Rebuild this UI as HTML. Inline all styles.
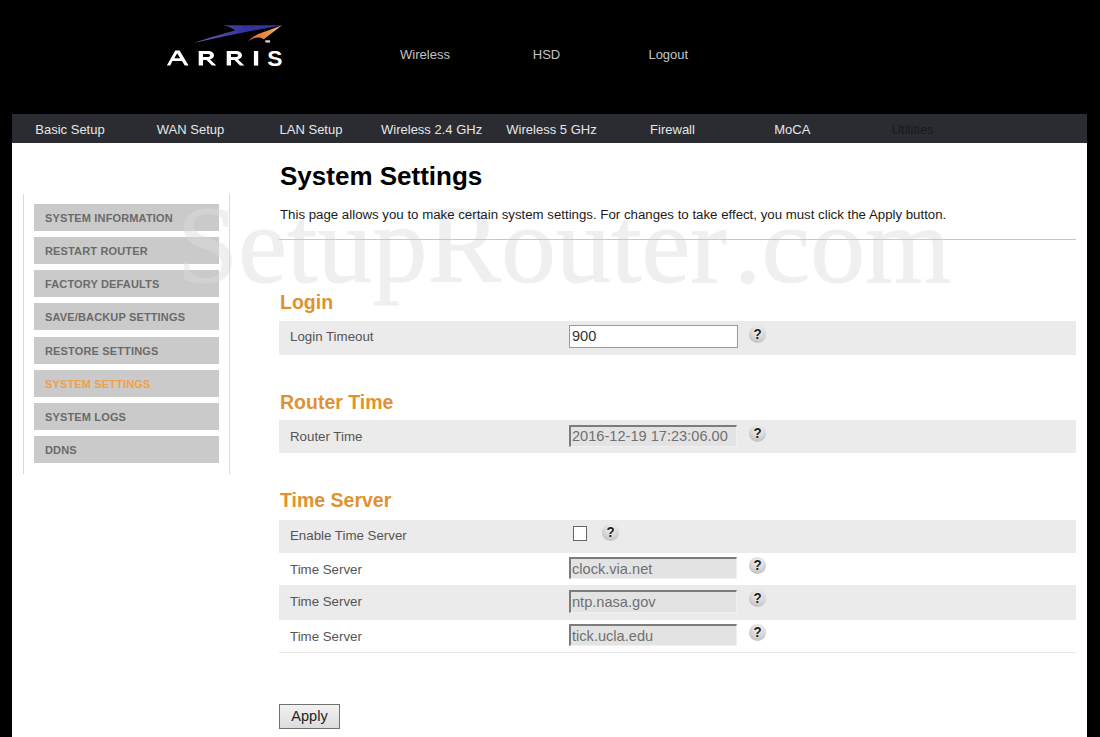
<!DOCTYPE html>
<html><head><meta charset="utf-8">
<style>
*{margin:0;padding:0;box-sizing:border-box}
html,body{width:1100px;height:737px;overflow:hidden;background:#000;font-family:"Liberation Sans",sans-serif}
.a{position:absolute;white-space:nowrap}
#content{position:absolute;left:12px;top:143px;width:1075px;height:600px;background:#fff}
#nav{position:absolute;left:12px;top:114px;width:1075px;height:29px;background:#2a2c32}
.nv{position:absolute;top:122px;font-size:13px;line-height:16px;color:#e6e6e6;transform:translateX(-50%)}
.tn{position:absolute;top:47px;font-size:13px;line-height:16px;color:#c4c4c4;transform:translateX(-50%)}
#side{position:absolute;left:23px;top:194px;width:207px;height:280px;border-left:1px solid #d8d8d8;border-right:1px solid #d8d8d8}
.sb{position:absolute;left:34px;width:185px;height:27px;background:#cacaca;font-weight:bold;font-size:11px;color:#6a6a6a;padding-left:11px;line-height:29px;letter-spacing:0.15px}
.row{position:absolute;left:279px;width:797px}
.g{background:#ebebeb}
.lbl{position:absolute;left:290px;font-size:13.3px;color:#555;line-height:16px}
.h2{position:absolute;left:280px;font-size:19.5px;font-weight:bold;color:#df922f;line-height:22px}
.inp{position:absolute;left:569px;width:168px;height:22px;font-size:14.6px;color:#707070;background:#e3e3e3;border-top:2px solid #7c7c7c;border-left:2px solid #7c7c7c;border-right:1px solid #f0f0f0;border-bottom:1px solid #f0f0f0;padding-left:1px;line-height:21px}
.help{position:absolute;width:17px;height:17px;border-radius:50%;background:radial-gradient(circle at 55% 28%,#f4f4f4 0%,#d6d6d6 50%,#b2b2b2 100%);}
.help:after{content:"?";position:absolute;left:0;top:0;width:17px;text-align:center;font-weight:bold;font-size:14px;line-height:17px;color:#1e1e1e;transform:translateY(-0.5px) scale(0.95,1.08)}
#wm{position:absolute;left:177px;top:180px;font-family:"Liberation Serif",serif;font-size:110px;line-height:130px;color:#dddddd;opacity:0.44;-webkit-text-stroke:0.9px #dddddd;white-space:nowrap;z-index:1}
.t{z-index:2}
</style></head><body>
<div id="content"></div>
<!-- logo -->
<svg class="a" style="left:0;top:0" width="300" height="80" viewBox="0 0 300 80">
  <defs>
    <linearGradient id="og" x1="248" y1="41" x2="282" y2="25" gradientUnits="userSpaceOnUse">
      <stop offset="0" stop-color="#d63c52"/>
      <stop offset="0.3" stop-color="#e47a44"/>
      <stop offset="0.6" stop-color="#ea9640"/>
      <stop offset="1" stop-color="#e8c0b0"/>
    </linearGradient>
    <linearGradient id="bg" x1="193" y1="42" x2="282" y2="25" gradientUnits="userSpaceOnUse">
      <stop offset="0" stop-color="#7a74b0"/>
      <stop offset="0.35" stop-color="#4a44a0"/>
      <stop offset="0.6" stop-color="#3330a0"/>
      <stop offset="1" stop-color="#3a3aa8"/>
    </linearGradient>
  </defs>
  <path d="M222.5,25.2 L282,25.2 Q237.6,33.2 193.3,43 C205,39.5 222,33.8 235.3,30.6 C232,28 228,26 222.5,25.2 Z" fill="url(#bg)"/>
  <path d="M282,25.3 L263.8,39.3 C259,36 253,38 248.2,41.6 C251,37.5 256,34.5 263,32.2 C270,30 276,27.5 282,25.3 Z" fill="url(#og)"/>
  <rect x="265.3" y="40.3" width="4.8" height="2.2" fill="#d8d8d8"/>
  <g fill="#fff" fill-rule="evenodd">
    <path d="M166.8,65.4 L175.3,50.6 L179.6,50.6 L188.6,65.4 L184.8,65.4 L182,61 L172.4,61 L170.3,65.4 Z M174.3,58.2 L180.2,58.2 L177.2,53.2 Z"/>
    <path id="rr" d="M198.7,51 L207.5,51 C212,51 214,53 214,55.3 C214,57.6 212.3,59 210,59.4 L216.4,65.6 L212,65.6 L206.5,59.9 L203,59.9 L203,65.6 L198.7,65.6 Z M203,54 L207.2,54 C209.3,54 210.2,54.6 210.2,55.5 C210.2,56.4 209.3,57 207.2,57 L203,57 Z"/>
    <use href="#rr" x="28" y="0"/>
    <rect x="253.9" y="51" width="4.3" height="14.6"/>
    <text x="0" y="0" font-family="Liberation Sans" font-weight="bold" font-size="21.5" transform="translate(267.2,65.5) scale(1.06,1)">S</text>
  </g>
</svg>
<div class="tn" style="left:425px">Wireless</div>
<div class="tn" style="left:546.5px">HSD</div>
<div class="tn" style="left:668.3px">Logout</div>

<div id="nav"></div>
<div class="nv" style="left:70px">Basic Setup</div>
<div class="nv" style="left:190.5px">WAN Setup</div>
<div class="nv" style="left:311px">LAN Setup</div>
<div class="nv" style="left:431.6px">Wireless 2.4 GHz</div>
<div class="nv" style="left:551.5px">Wireless 5 GHz</div>
<div class="nv" style="left:672.5px">Firewall</div>
<div class="nv" style="left:792.3px">MoCA</div>
<div class="nv" style="left:912.7px;color:#17191d">Utilities</div>

<div id="side"></div>
<div class="sb" style="top:204px">SYSTEM INFORMATION</div>
<div class="sb" style="top:237px">RESTART ROUTER</div>
<div class="sb" style="top:270px">FACTORY DEFAULTS</div>
<div class="sb" style="top:303px">SAVE/BACKUP SETTINGS</div>
<div class="sb" style="top:337px">RESTORE SETTINGS</div>
<div class="sb" style="top:370px;color:#f0a048">SYSTEM SETTINGS</div>
<div class="sb" style="top:403px">SYSTEM LOGS</div>
<div class="sb" style="top:436px">DDNS</div>

<div class="a t" style="left:280px;top:161px;font-size:26px;font-weight:bold;color:#000;line-height:30px">System Settings</div>
<div class="a t" style="left:280px;top:207px;font-size:13.25px;color:#1a1a1a;line-height:16px">This page allows you to make certain system settings. For changes to take effect, you must click the Apply button.</div>
<div class="a t" style="left:279px;top:239px;width:797px;height:1px;background:#c8c8c8"></div>

<div class="h2 t" style="top:291px">Login</div>
<div class="row g" style="top:321px;height:34px"></div>
<div class="lbl" style="top:329px">Login Timeout</div>
<div class="a" style="left:569px;top:325px;width:169px;height:23px;background:#fff;border:1px solid #9a9a9a;font-size:14.6px;color:#333;line-height:21px;padding-left:2px">900</div>
<div class="help" style="left:749px;top:325.5px"></div>

<div class="h2 t" style="top:391px">Router Time</div>
<div class="row g" style="top:420px;height:33px"></div>
<div class="lbl" style="top:429px">Router Time</div>
<div class="inp" style="top:425px;line-height:19px">2016-12-19 17:23:06.00</div>
<div class="help" style="left:749px;top:425px"></div>

<div class="h2 t" style="top:489px">Time Server</div>
<div class="row g" style="top:520px;height:33px"></div>
<div class="row" style="top:553px;height:32px"></div>
<div class="row g" style="top:585px;height:35px"></div>
<div class="row" style="top:620px;height:33px;border-bottom:1px solid #e9e9e9"></div>
<div class="lbl" style="top:528px">Enable Time Server</div>
<div class="lbl" style="top:562px">Time Server</div>
<div class="lbl" style="top:594px">Time Server</div>
<div class="lbl" style="top:629px">Time Server</div>
<div class="a" style="left:573px;top:526px;width:14px;height:15px;background:#fff;border:1px solid #666"></div>
<div class="help" style="left:602px;top:524px"></div>
<div class="inp" style="top:557px">clock.via.net</div>
<div class="help" style="left:749px;top:557px"></div>
<div class="inp" style="top:590px;height:23px">ntp.nasa.gov</div>
<div class="help" style="left:749px;top:590px"></div>
<div class="inp" style="top:624px">tick.ucla.edu</div>
<div class="help" style="left:749px;top:624px"></div>

<div class="a" style="left:279px;top:704px;width:61px;height:25px;border:1px solid #707070;background:linear-gradient(#f2f2f2,#dcdcdc);font-size:14.5px;color:#222;text-align:center;line-height:23px">Apply</div>

<div id="wm">SetupRouter<span style="margin-left:7px">.com</span></div>
</body></html>
